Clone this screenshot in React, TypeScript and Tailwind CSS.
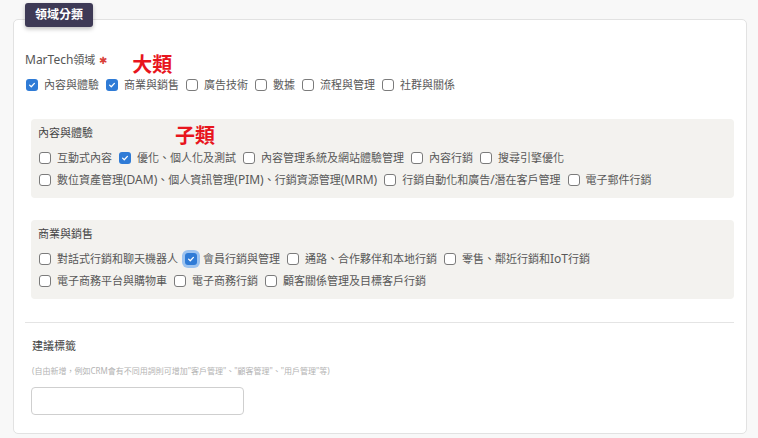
import { useState } from 'react';

type Item = { label: string; checked?: boolean; focused?: boolean };

// Latin runs sit slightly larger than the CJK text in the source form
function Mixed({ text }: { text: string }) {
  const parts = text.split(/([A-Za-z()\/]+)/);
  return (
    <>
      {parts.map((p, i) =>
        /^[A-Za-z()\/]+$/.test(p) ? (
          <span key={i} className="text-[12px]">
            {p}
          </span>
        ) : (
          p
        )
      )}
    </>
  );
}

function Box({ checked, focused }: { checked?: boolean; focused?: boolean }) {
  if (checked) {
    return (
      <span
        className={`inline-flex w-[12px] h-[12px] shrink-0 items-center justify-center rounded-[3px] bg-[#2f7bd6] ${
          focused ? 'ring-[3px] ring-[#9cc3f0]' : ''
        }`}
      >
        <svg className="w-[8px] h-[8px]" viewBox="0 0 10 10" fill="none">
          <path d="M2 5.2 4.1 7.2 8 3" stroke="white" strokeWidth="1.6" strokeLinecap="round" strokeLinejoin="round" />
        </svg>
      </span>
    );
  }
  return <span className="inline-block w-[12px] h-[12px] shrink-0 rounded-[3px] border border-[#7b7b7b] bg-white" />;
}

function CheckRow({ items }: { items: Item[] }) {
  return (
    <div className="flex items-center h-[22px] gap-[7px] whitespace-nowrap">
      {items.map((it) => (
        <label key={it.label} className="flex items-center gap-[6px] text-[11px] leading-[16px] text-[#585858]">
          <Box checked={it.checked} focused={it.focused} />
          <span>
            <Mixed text={it.label} />
          </span>
        </label>
      ))}
    </div>
  );
}

function SubGroup({ title, rows, note }: { title: string; rows: Item[][]; note?: string }) {
  return (
    <div className="ml-[6px] rounded-[4px] bg-[#f3f2ef] px-[7px] pt-[6px] pb-[7px]">
      <div className="flex items-start h-[16px] mb-[6px]">
        <span className="text-[11px] leading-[16px] text-[#444]">{title}</span>
        {note && (
          <span className="ml-[82px] mt-[1px] text-[20px] leading-[20px] font-bold text-[#e8151d]">{note}</span>
        )}
      </div>
      <div className="pl-[1px]">
        {rows.map((r, i) => (
          <CheckRow key={i} items={r} />
        ))}
      </div>
    </div>
  );
}

export default function App() {
  const [tag, setTag] = useState('');

  return (
    <div
      className="min-h-screen bg-[#f8f8f8] pt-[19px] pl-[13px]"
      style={{ fontFamily: '"Noto Sans", "Noto Sans CJK TC", sans-serif' }}
    >
      <div className="relative w-[734px] h-[415px] rounded-[5px] border border-[#e2e2e2] bg-white pl-[11px] pr-[12px] pt-[32px]">
        {/* Section tab */}
        <div className="absolute top-[-17px] left-[11px] h-[24px] px-[10px] flex items-center rounded-[3px] bg-[#3e3a56] text-[12px] font-bold text-white shadow-[0_2px_4px_rgba(0,0,0,0.25)]">
          領域分類
        </div>

        {/* Main category */}
        <div className="flex items-start h-[16px]">
          <span className="text-[11px] leading-[16px] text-[#555]">
            <Mixed text="MarTech領域" />
          </span>
          <span className="ml-[4px] text-[10px] leading-[16px] text-[#d9413a]">✱</span>
          <span className="ml-[25px] mt-[3px] text-[20px] leading-[20px] font-bold text-[#e8151d]">大類</span>
        </div>
        <div className="mt-[6px] pl-[1px]">
          <CheckRow
            items={[
              { label: '內容與體驗', checked: true },
              { label: '商業與銷售', checked: true },
              { label: '廣告技術' },
              { label: '數據' },
              { label: '流程與管理' },
              { label: '社群與關係' },
            ]}
          />
        </div>

        {/* Sub categories */}
        <div className="mt-[23px]">
          <SubGroup
            title="內容與體驗"
            note="子類"
            rows={[
              [
                { label: '互動式內容' },
                { label: '優化、個人化及測試', checked: true },
                { label: '內容管理系統及網站體驗管理' },
                { label: '內容行銷' },
                { label: '搜尋引擎優化' },
              ],
              [
                { label: '數位資產管理(DAM)、個人資訊管理(PIM)、行銷資源管理(MRM)' },
                { label: '行銷自動化和廣告/潛在客戶管理' },
                { label: '電子郵件行銷' },
              ],
            ]}
          />
        </div>
        <div className="mt-[22px]">
          <SubGroup
            title="商業與銷售"
            rows={[
              [
                { label: '對話式行銷和聊天機器人' },
                { label: '會員行銷與管理', checked: true, focused: true },
                { label: '通路、合作夥伴和本地行銷' },
                { label: '零售、鄰近行銷和IoT行銷' },
              ],
              [
                { label: '電子商務平台與購物車' },
                { label: '電子商務行銷' },
                { label: '顧客關係管理及目標客戶行銷' },
              ],
            ]}
          />
        </div>

        <div className="mt-[23px] border-t border-[#e4e4e4]" />

        {/* Suggested tags */}
        <div className="pl-[7px] pt-[15px]">
          <div className="text-[11px] leading-[16px] text-[#444]">建議標籤</div>
          <div className="mt-[12px] text-[8px] leading-[10px] text-[#b3b3b3] whitespace-nowrap">
            (自由新增，例如CRM會有不同用詞則可增加"客戶管理"、"顧客管理"、"用戶管理"等)
          </div>
          <input
            value={tag}
            onChange={(e) => setTag(e.target.value)}
            className="mt-[11px] ml-[-1px] block w-[213px] h-[28px] rounded-[4px] border border-[#cfcfcf] bg-white px-2 text-[11px] outline-none"
          />
        </div>
      </div>
    </div>
  );
}
